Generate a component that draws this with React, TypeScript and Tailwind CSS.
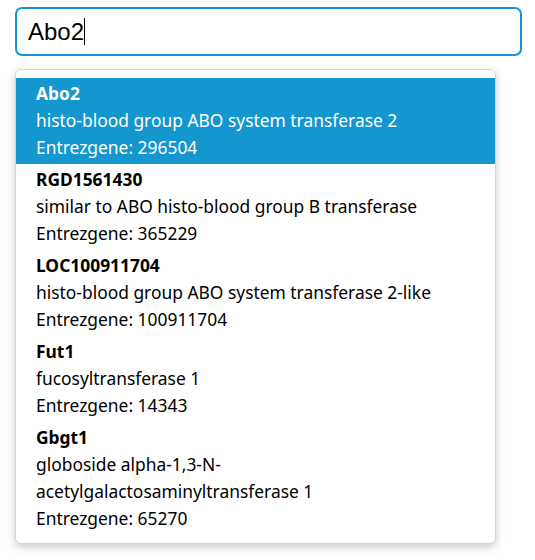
const genes = [
  { symbol: "Abo2", name: "histo-blood group ABO system transferase 2", id: "296504" },
  { symbol: "RGD1561430", name: "similar to ABO histo-blood group B transferase", id: "365229" },
  { symbol: "LOC100911704", name: "histo-blood group ABO system transferase 2-like", id: "100911704" },
  { symbol: "Fut1", name: "fucosyltransferase 1", id: "14343" },
  { symbol: "Gbgt1", name: "globoside alpha-1,3-N-acetylgalactosaminyltransferase 1", id: "65270" },
]

export default function App() {
  return (
    <div className="w-[535px] h-[560px] bg-white pt-[7px] pl-[15px]">
      <div className="w-[507px] h-[49px] border-2 border-[#1595cd] rounded-[7px] flex items-center pl-[11px]">
        <span className="text-[24px] text-black font-['Liberation_Sans',Arial,sans-serif] leading-none">Abo2</span>
        <span className="w-px h-[27px] bg-black" />
      </div>

      <div className="mt-[13px] w-[481px] bg-white border border-[#d4d4d4] rounded-[6px] shadow-[0_3px_8px_rgba(0,0,0,0.22)] py-[8px] font-['Noto_Sans',sans-serif] text-[17.4px] leading-[27px] text-black">
        {genes.map((g, i) => (
          <div
            key={g.symbol}
            className={
              i === 0
                ? "bg-[#1496ce] text-white pl-[20px] pr-[24px] pt-[2px] pb-[3px]"
                : "pl-[20px] pr-[24px] pt-[2px] pb-[3px]"
            }
          >
            <div className="font-bold">{g.symbol}</div>
            <div>{g.name}</div>
            <div>Entrezgene: {g.id}</div>
          </div>
        ))}
      </div>
    </div>
  )
}
